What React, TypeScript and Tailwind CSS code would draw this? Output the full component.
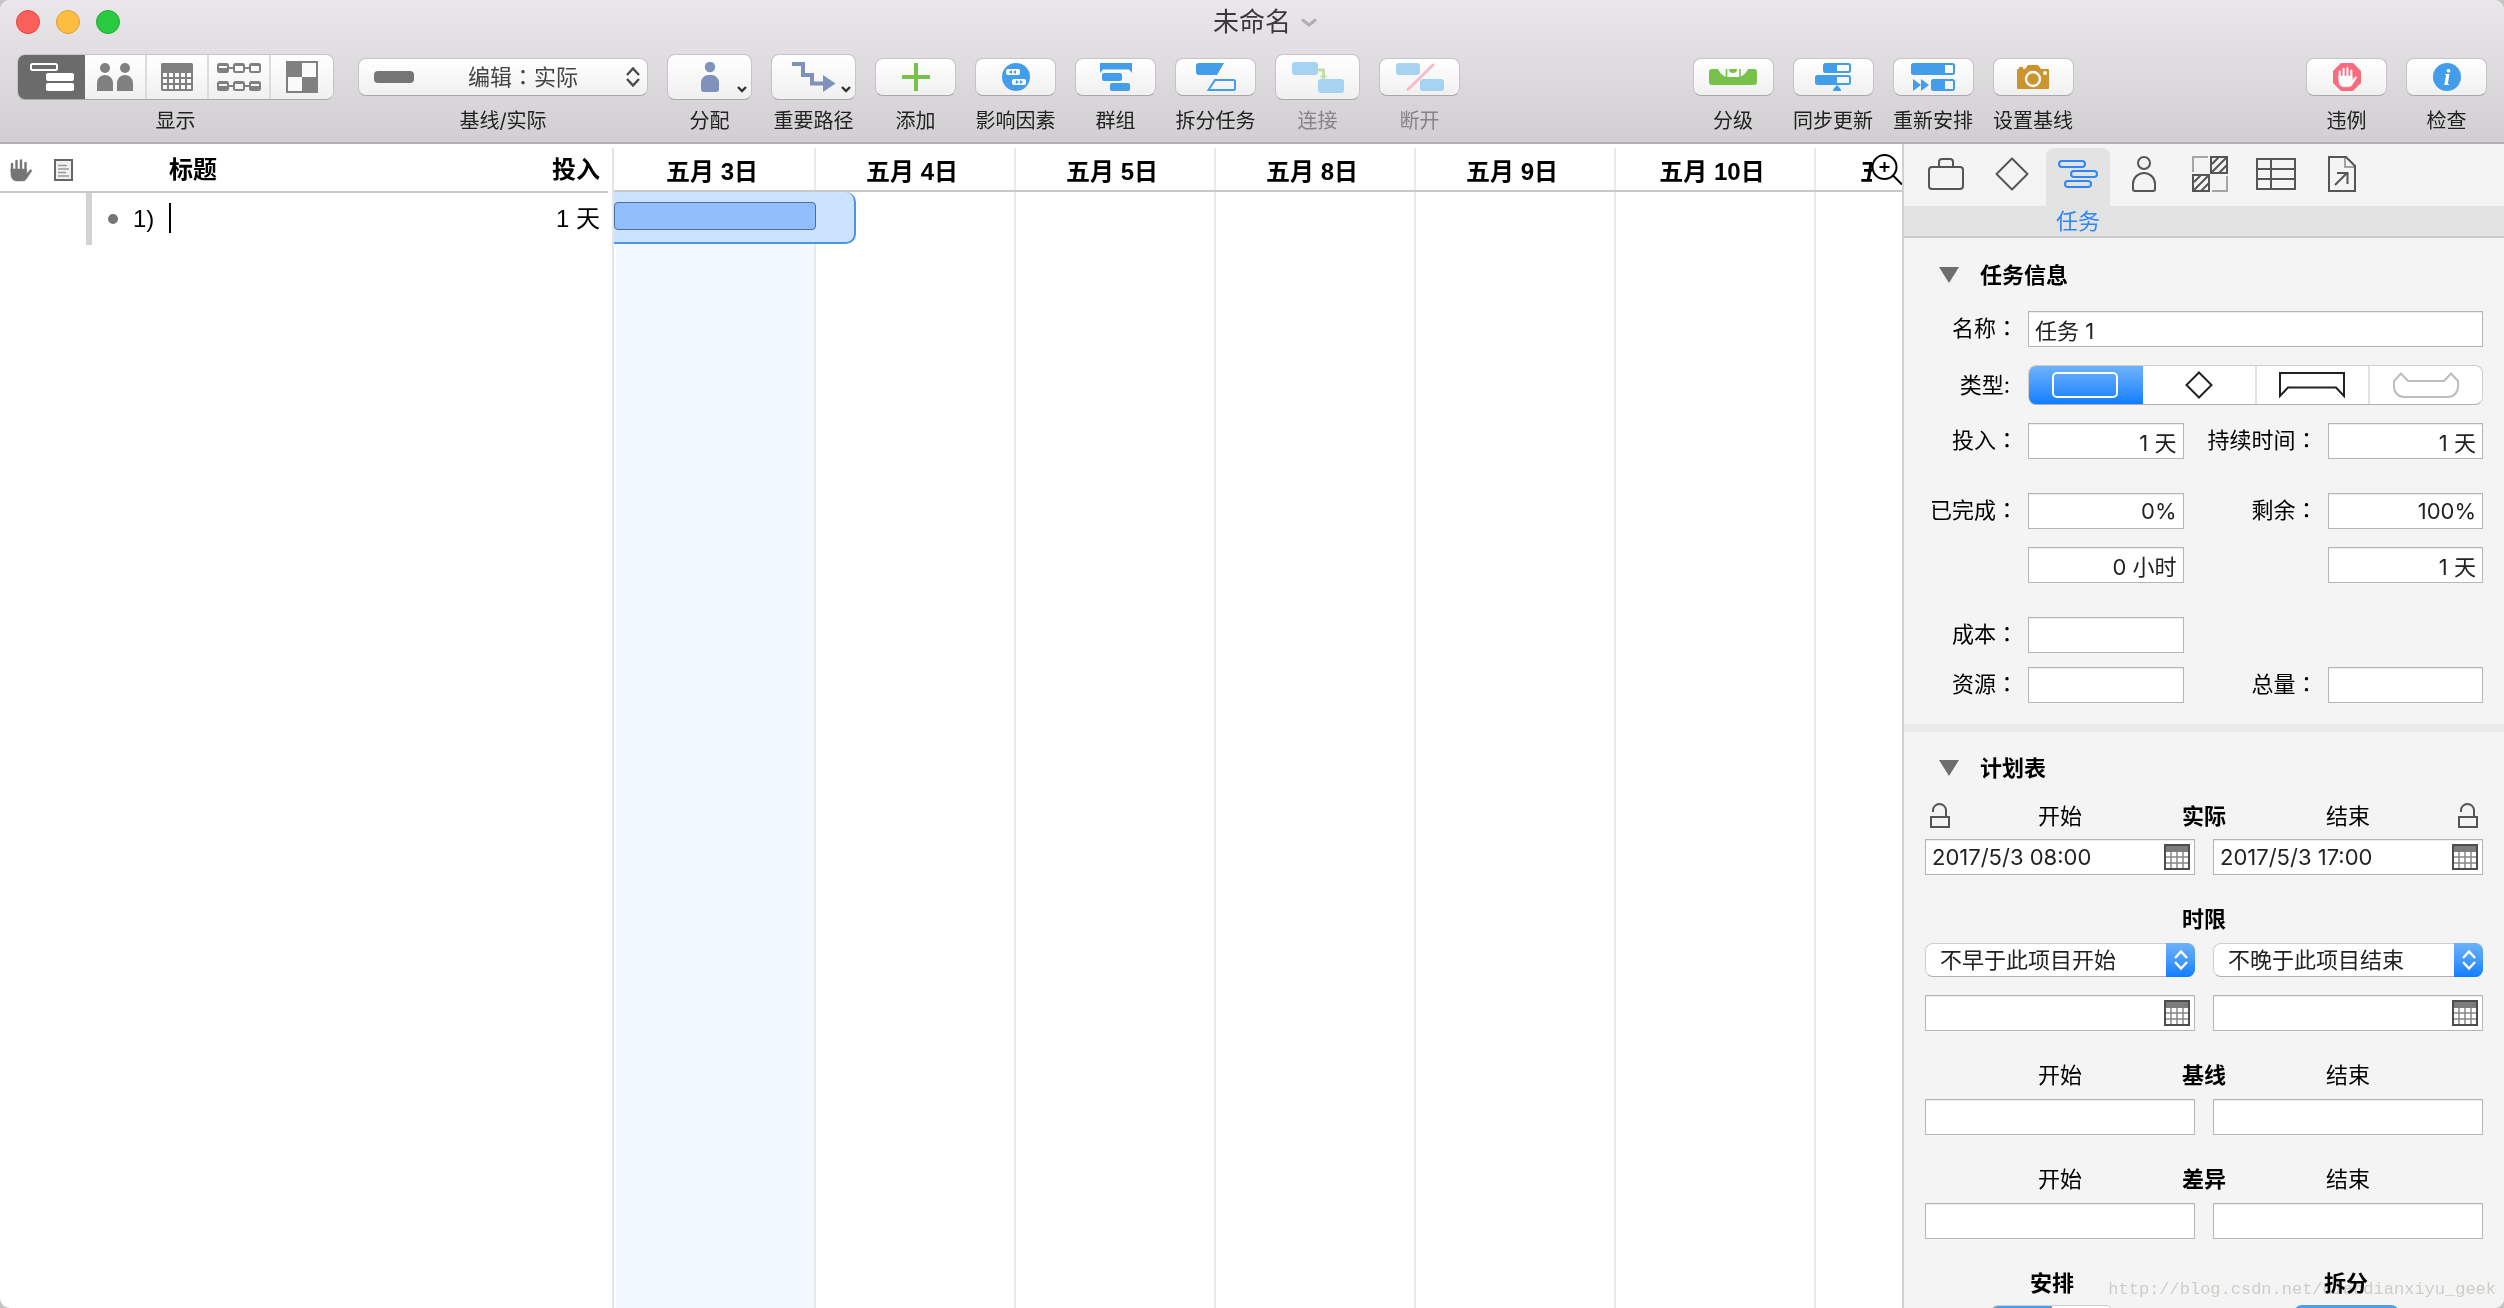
import { useState, type ReactNode } from 'react';

const BLUE = '#449de8';
const GREY = '#808080';

const days = ['五月 3日', '五月 4日', '五月 5日', '五月 8日', '五月 9日', '五月 10日', '五月 11日'];

/* ---------- toolbar icons ---------- */

function OutlineViewIcon() {
  return (
    <svg width="44" height="28" fill="#fff">
      <rect x="1" y="1" width="26" height="6" rx="1.5" fill="none" stroke="#fff" strokeWidth="2" />
      <rect x="16" y="10" width="28" height="8" rx="2" />
      <rect x="16" y="20" width="28" height="8" rx="2" />
    </svg>
  );
}

function PeopleIcon() {
  return (
    <svg width="36" height="28" fill={GREY}>
      <circle cx="8" cy="5" r="5" />
      <circle cx="28" cy="5" r="5" />
      <path d="M0 28V20a8 8 0 0 1 16 0V28zM20 28V20a8 8 0 0 1 16 0V28z" />
    </svg>
  );
}

function CalendarIcon() {
  return (
    <svg width="32" height="28">
      <rect width="32" height="28" rx="1.5" fill={GREY} />
      {[10, 16, 22].map((y) =>
        [2, 8, 14, 20, 26].map((x) => <rect key={`${x}-${y}`} x={x} y={y} width="4" height="4" fill="#fafafa" />)
      )}
    </svg>
  );
}

function NetworkIcon() {
  const filled = ['0-0', '0-18', '32-18'];
  return (
    <svg width="44" height="28" fill="none" stroke={GREY} strokeWidth="2">
      <path d="M12 5h4M28 5h4M12 23h4M28 23h4" />
      {[0, 18].map((y) =>
        [0, 16, 32].map((x) => (
          <g key={`${x}-${y}`}>
            <rect x={x + 1} y={y + 1} width="10" height="8" rx="1.5" />
            <path d={`M${x + 1} ${y + 2}h10`} />
            {filled.includes(`${x}-${y}`) && <rect x={x + 2} y={y + 5} width="8" height="4" fill={GREY} stroke="none" />}
          </g>
        ))
      )}
    </svg>
  );
}

function StylesIcon() {
  return (
    <svg width="32" height="32">
      <rect x="1" y="1" width="30" height="30" fill="#fafafa" stroke={GREY} strokeWidth="2" />
      <path d="M1 1h15v15H1zM16 16h15v15H16z" fill={GREY} />
    </svg>
  );
}

function AssignIcon() {
  return (
    <svg width="18" height="30" fill="#7f92bc">
      <circle cx="9" cy="5" r="5.2" />
      <path d="M0 27V20.500a7.500 7.500 0 0 1 7.500-7.500h3a7.500 7.500 0 0 1 7.500 7.500V27a3 3 0 0 1-3 3H3a3 3 0 0 1-3-3z" />
    </svg>
  );
}

function PathIcon() {
  return (
    <svg width="44" height="30">
      <path d="M0 2H11V13H20V21.500H33" fill="none" stroke="#7f92bc" strokeWidth="4" />
      <path d="M31 13L43.500 21.500L31 30z" fill="#7f92bc" />
    </svg>
  );
}

function PlusIcon() {
  return (
    <svg width="28" height="28">
      <path d="M14 0V28M0 14H28" stroke="#78c24b" strokeWidth="4" />
    </svg>
  );
}

function FactorsIcon() {
  return (
    <svg width="28" height="28" fill={BLUE}>
      <circle cx="14" cy="14" r="14" />
      <rect x="4" y="6" width="14" height="6" rx="2" fill="#fff" />
      <rect x="10" y="16" width="14" height="6" rx="2" fill="#fff" />
      <path d="M10 7v4L7 9zM14 7v4l-3-2zM14 17v4l3-2zM18 17v4l3-2z" />
    </svg>
  );
}

function GroupIcon() {
  return (
    <svg width="32" height="28" fill={BLUE}>
      <path d="M0 0H32V10L29 6.500H3L0 10z" />
      <rect x="2" y="10" width="20" height="8" rx="2" />
      <rect x="10" y="20" width="20" height="8" rx="2" />
    </svg>
  );
}

function SplitIcon() {
  return (
    <svg width="40" height="28">
      <path d="M3 0H28L21 12H3a3 3 0 0 1-3-3V3a3 3 0 0 1 3-3z" fill={BLUE} />
      <path d="M19 17H37.500a1.500 1.500 0 0 1 1.500 1.500V25.500a1.500 1.500 0 0 1-1.500 1.500H12.500z" fill="none" stroke={BLUE} strokeWidth="2" />
    </svg>
  );
}

function ConnectIcon() {
  return (
    <svg width="52" height="31" fill="#a6d3f1">
      <rect width="26" height="13" rx="3" />
      <rect x="26" y="17" width="26" height="14" rx="3" />
      <path d="M26 8H31.500V14" fill="none" stroke="#bfe0a9" strokeWidth="3" />
      <path d="M27.500 13.500h8L31.500 18z" fill="#bfe0a9" />
    </svg>
  );
}

function DisconnectIcon() {
  return (
    <svg width="48" height="28" fill="#a6d3f1">
      <rect width="24" height="12" rx="3" />
      <rect x="24" y="16" width="24" height="12" rx="3" />
      <path d="M12 26.500L37 2" stroke="#fbbac4" strokeWidth="3" strokeLinecap="round" />
    </svg>
  );
}

function LevelIcon() {
  return (
    <svg width="48" height="16">
      <rect width="48" height="16" rx="3" fill="#78c24b" />
      <path d="M9 0C11 4 14 7.500 18 8H30C34 7.500 37 4 39 0z" fill="#fafafa" />
      <path d="M17.500 0V8M31 0V8" stroke="#78c24b" strokeWidth="1.600" />
      <path d="M20 0h8a4 4 0 0 1-8 0z" fill="#78c24b" />
    </svg>
  );
}

function CatchUpIcon() {
  return (
    <svg width="36" height="28" fill={BLUE}>
      <rect x="9" y="1" width="26" height="8" rx="1.500" fill="none" stroke={BLUE} strokeWidth="2" />
      <rect x="9" y="1" width="13" height="8" />
      <rect x="1" y="13" width="34" height="8" rx="1.500" fill="none" stroke={BLUE} strokeWidth="2" />
      <rect x="1" y="13" width="21" height="8" />
      <path d="M22 22L26 26.500V28H18V26.500z" />
    </svg>
  );
}

function RescheduleIcon() {
  return (
    <svg width="44" height="28" fill={BLUE}>
      <rect x="1" y="1" width="42" height="10" rx="1.500" fill="none" stroke={BLUE} strokeWidth="2" />
      <rect x="1" y="1" width="33" height="10" />
      <rect x="21" y="17" width="22" height="10" rx="1.500" fill="none" stroke={BLUE} strokeWidth="2" />
      <rect x="21" y="17" width="13" height="10" />
      <path d="M2 16L10 22L2 28zM10 16L18 22L10 28z" />
    </svg>
  );
}

function CameraIcon() {
  return (
    <svg width="32" height="24">
      <path d="M1 4H2V2H6V4H8L11 0H21L24 4H31a1 1 0 0 1 1 1V23a1 1 0 0 1-1 1H1a1 1 0 0 1-1-1V5a1 1 0 0 1 1-1z" fill="#cc942f" />
      <circle cx="16" cy="14" r="7" fill="none" stroke="#fafafa" strokeWidth="2.400" />
      <circle cx="28" cy="8" r="2" fill="#fafafa" />
    </svg>
  );
}

function HandShape({ color }: { color: string }) {
  return (
    <g stroke={color} fill={color} strokeLinecap="round" strokeLinejoin="round">
      <path d="M2 5V13M6.500 2V12M11 1.500V12M15.500 4V13" strokeWidth="2.400" fill="none" />
      <path d="M1 10H16.500V15L20.500 10.500L22 11.500L17 19C16 21 14.500 22 12.500 22H6.500C3 22 1 18.500 1 15.500z" strokeWidth="0.500" />
    </g>
  );
}

function ViolationsIcon() {
  return (
    <svg width="28" height="28">
      <path d="M8 0H20L28 8V20L20 28H8L0 20V8z" fill="#fb6b80" />
      <g transform="translate(5 4) scale(0.860 0.900)">
        <HandShape color="#fff" />
      </g>
    </svg>
  );
}

function InfoIcon() {
  return (
    <svg width="28" height="28">
      <circle cx="14" cy="14" r="14" fill={BLUE} />
      <text x="14" y="22" textAnchor="middle" fill="#fff" className="font-['Liberation_Serif',serif] text-[24px] font-bold italic">
        i
      </text>
    </svg>
  );
}

function UpDown({ color }: { color: string }) {
  return (
    <svg width="14" height="20" fill="none" stroke={color} strokeWidth="2.400">
      <path d="M1 8L7 1.500L13 8M1 12L7 18.500L13 12" />
    </svg>
  );
}

/* ---------- inspector icons ---------- */

function IconFrame({ w, h, children }: { w: number; h: number; children: ReactNode }) {
  return (
    <svg width={w} height={h} fill="none" stroke="currentColor" strokeWidth="2">
      {children}
    </svg>
  );
}

const tabs = [
  {
    name: '项目',
    icon: (
      <IconFrame w={36} h={32}>
        <rect x="1" y="9" width="34" height="22" rx="3" />
        <path d="M11 9V4a3 3 0 0 1 3-3h8a3 3 0 0 1 3 3v5" />
      </IconFrame>
    ),
  },
  {
    name: '里程碑',
    icon: (
      <IconFrame w={34} h={34}>
        <path d="M17 1.500L32.500 17L17 32.500L1.500 17z" strokeLinejoin="round" />
      </IconFrame>
    ),
  },
  {
    name: '任务',
    icon: (
      <IconFrame w={40} h={28}>
        <rect x="1" y="1" width="26" height="6" rx="3" />
        <rect x="13" y="11" width="26" height="6" rx="3" />
        <rect x="7" y="21" width="26" height="6" rx="3" />
      </IconFrame>
    ),
  },
  {
    name: '资源',
    icon: (
      <IconFrame w={24} h={36}>
        <circle cx="12" cy="7" r="6" />
        <path d="M1 33V28a11 11 0 0 1 22 0V33a2 2 0 0 1-2 2H3a2 2 0 0 1-2-2z" />
      </IconFrame>
    ),
  },
  {
    name: '样式',
    icon: (
      <IconFrame w={36} h={36}>
        <path d="M19 1H35V17H19zM1 19H17V35H1z" />
        <path d="M20 8L27 1M20 16L34 2M27 17L35 9M2 26L9 19M2 34L16 20M9 35L17 27" />
        <path d="M1 16V1H16M35 20V35H20" opacity="0.500" />
      </IconFrame>
    ),
  },
  {
    name: '自定数据',
    icon: (
      <IconFrame w={40} h={32}>
        <path d="M1 1H39V31H1zM1 11H39M1 21H39M15 1V31" />
      </IconFrame>
    ),
  },
  {
    name: '附件',
    icon: (
      <IconFrame w={28} h={36}>
        <path d="M1 1H18L27 10V35H1z" />
        <path d="M17 1V11H27" strokeWidth="1.500" opacity="0.700" />
        <path d="M7 29L19 17M9 17H19.500V28" />
      </IconFrame>
    ),
  },
];

const taskTypes = [
  {
    name: '任务',
    icon: (
      <IconFrame w={66} h={26}>
        <rect x="1" y="1" width="64" height="24" rx="4" />
      </IconFrame>
    ),
  },
  {
    name: '里程碑',
    icon: (
      <IconFrame w={28} h={28}>
        <path d="M14 1.500L26.500 14L14 26.500L1.500 14z" />
      </IconFrame>
    ),
  },
  {
    name: '群组',
    icon: (
      <IconFrame w={66} h={26}>
        <path d="M1 1H65V24L57 15.500H9L1 24z" />
      </IconFrame>
    ),
  },
  {
    name: '吊床',
    icon: (
      <IconFrame w={66} h={26}>
        <path d="M8 1.500L15 9H51L58 1.500L65 9V15A10 10 0 0 1 55 25H11A10 10 0 0 1 1 15V9z" />
      </IconFrame>
    ),
  },
];

/* ---------- toolbar ---------- */

type ToolProps = { label: string; icon: ReactNode; tall?: boolean; menu?: boolean; disabled?: boolean };

function Tool({ label, icon, tall, menu, disabled }: ToolProps) {
  return (
    <button disabled={disabled} className="flex flex-col items-center gap-[7px]">
      <span className="flex h-[46px] items-center">
        <span
          className={`relative flex items-center justify-center rounded-lg border border-[#c6c4c6] border-b-[#a9a7a9] bg-linear-to-b from-white to-[#f0f0f0] ${
            tall ? 'h-[46px] w-[85px]' : 'h-[38px] w-[81px]'
          }`}
        >
          {icon}
          {menu && (
            <svg width="10" height="7" className="absolute right-1 bottom-1.5" fill="none" stroke="#333" strokeWidth="2.400">
              <path d="M1 1L5 5L9 1" />
            </svg>
          )}
        </span>
      </span>
      <span className={`h-7 text-xl leading-7 whitespace-nowrap ${disabled ? 'text-[#868486]' : 'text-[#222]'}`}>{label}</span>
    </button>
  );
}

const views = [
  { name: '大纲', width: 'w-[67px]', icon: <OutlineViewIcon /> },
  { name: '资源', width: 'w-[62px]', icon: <PeopleIcon /> },
  { name: '日历', width: 'w-[62px]', icon: <CalendarIcon /> },
  { name: '网络', width: 'w-[62px]', icon: <NetworkIcon /> },
  { name: '样式', width: 'w-[62px]', icon: <StylesIcon /> },
];

function Toolbar() {
  const [view, setView] = useState(0);

  return (
    <header className="border-b-2 border-[#b1afb1] bg-linear-to-b from-[#e9e7e9] to-[#d1cfd1]">
      <div className="grid h-11 grid-cols-[1fr_auto_1fr] items-center px-4">
        <div className="flex gap-4">
          <button aria-label="关闭" className="size-6 rounded-full border border-[#e0443e] bg-[#fd5f5b]" />
          <button aria-label="最小化" className="size-6 rounded-full border border-[#dea034] bg-[#fdbd40]" />
          <button aria-label="缩放" className="size-6 rounded-full border border-[#1fac35] bg-[#29c940]" />
        </div>
        <h1 className="flex items-center gap-2.5 pl-[26px] text-[26px] leading-8 text-[#3a383a]">
          未命名
          <svg width="16" height="9" fill="none" stroke="#b0aeb0" strokeWidth="3">
            <path d="M1 1.500L8 7L15 1.500" />
          </svg>
        </h1>
      </div>

      <div className="flex items-start px-[17px] pt-2.5 pb-[7px]">
        <div className="flex flex-col items-center gap-[7px]">
          <div className="flex h-[46px] overflow-hidden rounded-lg border border-[#c6c4c6] border-b-[#a9a7a9]">
            {views.map((v, i) => (
              <button
                key={v.name}
                aria-label={v.name}
                onClick={() => setView(i)}
                className={`flex items-center justify-center ${v.width} ${
                  view === i ? 'bg-[#6b6b6b]' : 'border-r-2 border-[#dcdcdc] bg-linear-to-b from-white to-[#f0f0f0] last:border-r-0'
                }`}
              >
                {v.icon}
              </button>
            ))}
          </div>
          <span className="h-7 text-xl leading-7 text-[#222]">显示</span>
        </div>

        <div className="ml-6 flex flex-col items-center gap-[7px]">
          <div className="flex h-[46px] items-center">
            <div className="relative">
              <select
                id="edit-mode"
                className="h-[38px] w-[290px] appearance-none rounded-lg border border-[#c6c4c6] border-b-[#a9a7a9] bg-linear-to-b from-white to-[#f0f0f0] pl-[109px] font-['Inter','Noto_Sans_CJK_TC',sans-serif] text-[22px] text-[#444]"
              >
                <option>编辑：实际</option>
                <option>编辑：基线</option>
              </select>
              <span className="pointer-events-none absolute inset-y-0 left-4 right-2 flex items-center justify-between">
                <span className="h-3 w-10 rounded bg-[#757575]" />
                <UpDown color="#4a4a4a" />
              </span>
            </div>
          </div>
          <label htmlFor="edit-mode" className="h-7 text-xl leading-7 text-[#222]">
            基线/实际
          </label>
        </div>

        <div className="ml-[19px] flex gap-[19px]">
          <Tool label="分配" icon={<AssignIcon />} tall menu />
          <Tool label="重要路径" icon={<PathIcon />} tall menu />
          <Tool label="添加" icon={<PlusIcon />} />
          <Tool label="影响因素" icon={<FactorsIcon />} />
          <Tool label="群组" icon={<GroupIcon />} />
          <Tool label="拆分任务" icon={<SplitIcon />} />
          <Tool label="连接" icon={<ConnectIcon />} tall disabled />
          <Tool label="断开" icon={<DisconnectIcon />} disabled />
        </div>
        <div className="flex-1" />
        <div className="flex gap-[19px]">
          <Tool label="分级" icon={<LevelIcon />} />
          <Tool label="同步更新" icon={<CatchUpIcon />} />
          <Tool label="重新安排" icon={<RescheduleIcon />} />
          <Tool label="设置基线" icon={<CameraIcon />} />
        </div>
        <div className="flex-1" />
        <div className="flex gap-[19px]">
          <Tool label="违例" icon={<ViolationsIcon />} />
          <Tool label="检查" icon={<InfoIcon />} />
        </div>
      </div>
    </header>
  );
}

/* ---------- outline + gantt ---------- */

function Outline() {
  return (
    <section className="flex w-[614px] shrink-0">
      <div className="mr-1 flex-1">
        <table className="w-full table-fixed border-collapse font-['Liberation_Sans','Noto_Sans_CJK_SC',sans-serif] text-2xl">
          <thead>
            <tr className="h-12 border-b-2 border-[#c8c8c8]">
              <th className="w-[42px] pt-1.5 pl-2.5">
                <svg width="24" height="24" aria-label="违例">
                  <HandShape color="#757575" />
                </svg>
              </th>
              <th className="w-[127px] pt-1.5 pl-3">
                <svg width="20" height="24" fill="none" stroke="#666" strokeWidth="2" aria-label="备注">
                  <rect x="1" y="1" width="17" height="20" fill="#f0f0f0" />
                  <path d="M4 6.500H13M4 10H15M4 13.500H12M4 17H15" stroke="#999" strokeWidth="1.500" />
                </svg>
              </th>
              <th className="pt-1 text-left font-bold">标题</th>
              <th className="w-[120px] pt-1 pr-2 text-right font-bold">投入</th>
            </tr>
          </thead>
          <tbody>
            <tr className="h-[52px]">
              <td />
              <td className="h-[52px] p-0">
                <div className="ml-11 flex h-[52px] items-center border-l-6 border-[#d2d2d2] pl-4">
                  <span className="size-2.5 rounded-full bg-[#757575]" />
                  <span className="ml-[15px]">1)</span>
                </div>
              </td>
              <td className="p-0 pb-1">
                <input aria-label="标题" className="h-[30px] w-full border-l-2 border-black bg-transparent align-middle outline-none" />
              </td>
              <td className="pr-2 text-right">1 天</td>
            </tr>
          </tbody>
        </table>
      </div>
      <div className="mt-1 w-0.5 bg-[#e4e4e4]" />
    </section>
  );
}

function Gantt() {
  return (
    <section className="relative flex min-w-0 flex-1 flex-col overflow-hidden">
      <div className="flex h-12 border-b-2 border-[#c8c8c8] pl-0.5">
        {days.map((d) => (
          <div
            key={d}
            className="mt-1 flex w-[200px] shrink-0 items-center justify-center border-r-2 border-[#e9e9e9] pt-1.5 pr-1.5 font-['Liberation_Sans','Noto_Sans_CJK_SC',sans-serif] text-2xl font-bold"
          >
            {d}
          </div>
        ))}
      </div>
      <div className="relative flex flex-1 pl-0.5">
        {days.map((d) => (
          <div key={d} className="w-[200px] shrink-0 border-r-2 border-[#e9e9e9] first:bg-[#f1f8ff]" />
        ))}
        {/* selected row and its bar */}
        <div className="absolute top-0 left-0 h-[52px] w-[242px] rounded-r-[10px] border-r-2 border-b-2 border-[#4a96e6] bg-[#cbe3fe]">
          <div className="mt-2.5 h-7 w-[202px] rounded border border-[#4d6f9c] bg-[#92bffb]" />
        </div>
      </div>
      <button aria-label="放大" className="absolute top-1 right-0 flex h-[42px] w-[30px] items-center bg-white">
        <svg width="30" height="32" fill="none" stroke="#000" strokeWidth="2">
          <circle cx="12.500" cy="14" r="12" />
          <path d="M12.500 9V19M7.500 14H17.500M21 22.500L30 31.500" />
        </svg>
      </button>
    </section>
  );
}

/* ---------- inspector ---------- */

const fieldClass = 'h-9 w-full min-w-0 border border-[#b5b5b5] bg-white px-1.5 text-[22px] text-[#222] shadow-[inset_0_1px_1px_#ededed]';

function FieldLabel({ htmlFor, children }: { htmlFor: string; children: ReactNode }) {
  return (
    <label htmlFor={htmlFor} className="pb-1 text-right text-[22px] leading-7 whitespace-nowrap">
      {children}
      <span className="font-['Noto_Sans_CJK_TC',sans-serif]">：</span>
    </label>
  );
}

function SectionTitle({ children }: { children: ReactNode }) {
  return (
    <h2 className="flex items-center gap-[21px] pl-[35px] text-[22px] leading-8 font-bold">
      <svg width="20" height="16" fill="#6e6e6e">
        <path d="M0 0H20L10 16z" />
      </svg>
      {children}
    </h2>
  );
}

function LockIcon() {
  return (
    <svg width="20" height="26" fill="none" stroke="#555" strokeWidth="2">
      <rect x="1" y="14" width="18" height="10" />
      <path d="M3 9V7.500a6.500 6.500 0 0 1 13 0V14" />
    </svg>
  );
}

function ColumnTitles({ title, ends, locks }: { title: string; ends?: boolean; locks?: boolean }) {
  return (
    <div className="grid grid-cols-[20px_1fr_44px_1fr_20px] items-center px-[5px] text-center text-[22px] leading-8">
      <span>{locks && <button aria-label="锁定开始" className="block"><LockIcon /></button>}</span>
      <span className="pr-3">{ends && '开始'}</span>
      <span className="font-bold">{title}</span>
      <span className="pl-3">{ends && '结束'}</span>
      <span>{locks && <button aria-label="锁定结束" className="block"><LockIcon /></button>}</span>
    </div>
  );
}

function DateField({ label, value }: { label: string; value?: string }) {
  return (
    <div className="relative">
      <input aria-label={label} defaultValue={value} className={fieldClass} />
      <button aria-label={`${label}日历`} className="absolute top-[5px] right-[5px]">
        <svg width="26" height="26">
          <rect width="26" height="26" fill="#4d4d4d" />
          <rect x="2" y="2" width="22" height="6" fill="#7c7c7c" />
          <rect x="2" y="8" width="22" height="16" fill="#fff" />
          <path d="M7 8V24M13 8V24M19 8V24M2 13H24M2 19H24" stroke="#888" strokeWidth="1.500" />
        </svg>
      </button>
    </div>
  );
}

function LimitSelect({ label, option }: { label: string; option: string }) {
  return (
    <div className="relative">
      <select
        aria-label={label}
        className="h-[34px] w-full appearance-none rounded-lg border border-[#cfcfcf] border-b-[#b0b0b0] bg-white pl-3.5 text-[22px] text-[#222]"
      >
        <option>{option}</option>
      </select>
      <span className="pointer-events-none absolute inset-y-0 right-0 flex w-[29px] items-center justify-center rounded-r-lg bg-linear-to-b from-[#6cb3fa] to-[#0a7dff]">
        <UpDown color="#fff" />
      </span>
    </div>
  );
}

function Inspector() {
  const [tab, setTab] = useState(2);
  const [type, setType] = useState(0);

  return (
    <aside className="w-[602px] shrink-0 overflow-hidden border-l-2 border-[#d0d0d0] bg-[#f4f4f4]">
      <nav className="flex gap-0.5 pt-1 pl-2.5">
        {tabs.map((t, i) => (
          <button
            key={t.name}
            aria-label={t.name}
            onClick={() => setTab(i)}
            className={`flex h-[58px] w-16 items-center justify-center rounded-t-lg pb-1.5 ${
              tab === i ? 'bg-[#e3e3e3] text-[#2f86f6]' : 'text-[#555]'
            }`}
          >
            {t.icon}
          </button>
        ))}
      </nav>
      <div className="flex border-b-2 border-[#cccccc] bg-[#e3e3e3] pl-[142px] text-[22px] leading-[30px] text-[#2f86f6]">
        <span className="w-16 text-center">{tabs[tab].name}</span>
      </div>

      <div className="border-b-8 border-[#eaeaea] pt-[21px] pb-[21px]">
        <SectionTitle>任务信息</SectionTitle>
        <div className="mt-5 grid grid-cols-[114px_minmax(0,1fr)_124px_minmax(0,1fr)] items-center gap-x-2.5 gap-y-[18px] pr-[21px]">
          <FieldLabel htmlFor="name">名称</FieldLabel>
          <input id="name" defaultValue="任务 1" className={`${fieldClass} col-span-3`} />

          <span className="pr-2 text-right text-[22px] leading-8">类型:</span>
          <div className="col-span-3 flex h-10 overflow-hidden rounded-lg border border-[#cfcfcf] border-b-[#b0b0b0] bg-white">
            {taskTypes.map((t, i) => (
              <button
                key={t.name}
                aria-label={t.name}
                onClick={() => setType(i)}
                className={`flex flex-1 items-center justify-center border-r-2 last:border-r-0 last:text-[#bdbdbd] ${
                  type === i ? 'border-transparent bg-linear-to-b from-[#6cb3fa] to-[#0a7dff] bg-origin-border text-white' : 'border-[#e2e2e2] text-[#222]'
                }`}
              >
                {t.icon}
              </button>
            ))}
          </div>

          <FieldLabel htmlFor="effort">投入</FieldLabel>
          <input id="effort" defaultValue="1 天" className={`${fieldClass} text-right`} />
          <FieldLabel htmlFor="duration">持续时间</FieldLabel>
          <input id="duration" defaultValue="1 天" className={`${fieldClass} text-right`} />
        </div>

        <div className="mt-[34px] grid grid-cols-[114px_minmax(0,1fr)_124px_minmax(0,1fr)] items-center gap-x-2.5 gap-y-[18px] pr-[21px]">
          <FieldLabel htmlFor="completed">已完成</FieldLabel>
          <input id="completed" defaultValue="0%" className={`${fieldClass} text-right`} />
          <FieldLabel htmlFor="remaining">剩余</FieldLabel>
          <input id="remaining" defaultValue="100%" className={`${fieldClass} text-right`} />

          <input aria-label="已完成时间" defaultValue="0 小时" className={`${fieldClass} col-start-2 text-right`} />
          <input aria-label="剩余时间" defaultValue="1 天" className={`${fieldClass} col-start-4 text-right`} />
        </div>

        <div className="mt-[34px] grid grid-cols-[114px_minmax(0,1fr)_124px_minmax(0,1fr)] items-center gap-x-2.5 gap-y-3.5 pr-[21px]">
          <FieldLabel htmlFor="cost">成本</FieldLabel>
          <input id="cost" className={`${fieldClass} text-right`} />
          <span className="col-span-2" />
          <FieldLabel htmlFor="resources">资源</FieldLabel>
          <input id="resources" className={`${fieldClass} text-right`} />
          <FieldLabel htmlFor="total">总量</FieldLabel>
          <input id="total" className={`${fieldClass} text-right`} />
        </div>
      </div>

      <div className="pt-5">
        <SectionTitle>计划表</SectionTitle>
        <div className="mt-4 flex flex-col gap-7 px-[21px]">
          <div className="flex flex-col gap-[7px]">
            <ColumnTitles title="实际" ends locks />
            <div className="grid grid-cols-2 gap-[18px]">
              <DateField label="实际开始" value="2017/5/3 08:00" />
              <DateField label="实际结束" value="2017/5/3 17:00" />
            </div>
          </div>
          <div className="flex flex-col gap-2">
            <ColumnTitles title="时限" />
            <div className="grid grid-cols-2 gap-[18px]">
              <LimitSelect label="开始时限" option="不早于此项目开始" />
              <LimitSelect label="结束时限" option="不晚于此项目结束" />
              <DateField label="时限开始" />
              <DateField label="时限结束" />
            </div>
          </div>
          {['基线', '差异'].map((t) => (
            <div key={t} className="flex flex-col gap-2">
              <ColumnTitles title={t} ends />
              <div className="grid grid-cols-2 gap-[18px]">
                <input aria-label={`${t}开始`} className={fieldClass} />
                <input aria-label={`${t}结束`} className={fieldClass} />
              </div>
            </div>
          ))}
        </div>
        <div className="mt-7 grid grid-cols-2 gap-[18px] pr-5 pl-2.5 text-center text-[22px] leading-8 font-bold">
          <div className="flex flex-col items-center gap-1.5">
            安排
            <div className="flex h-9 w-[124px] overflow-hidden rounded-lg border border-[#cfcfcf] bg-white">
              <button aria-label="尽早" className="flex-1 bg-[#4a9df0]" />
              <button aria-label="尽晚" className="flex-1" />
            </div>
          </div>
          <div className="flex flex-col items-center gap-1.5">
            拆分
            <button aria-label="允许拆分" className="h-9 w-[105px] rounded-lg bg-[#4a9df0]" />
          </div>
        </div>
      </div>
    </aside>
  );
}

export default function App() {
  return (
    <div className="h-screen bg-[#c4c4c4]">
      <div className="relative flex h-full flex-col overflow-hidden rounded-[10px] bg-white font-['Inter','Noto_Sans_CJK_SC',sans-serif] text-black">
        <Toolbar />
        <main className="flex min-h-0 flex-1">
          <Outline />
          <Gantt />
          <Inspector />
        </main>
        <p className="pointer-events-none absolute right-2 bottom-1.5 font-['Liberation_Mono',monospace] text-[17px] leading-6 text-[#d8d8d2] mix-blend-multiply">
          http://blog.csdn.net/diandianxiyu_geek
        </p>
      </div>
    </div>
  );
}
